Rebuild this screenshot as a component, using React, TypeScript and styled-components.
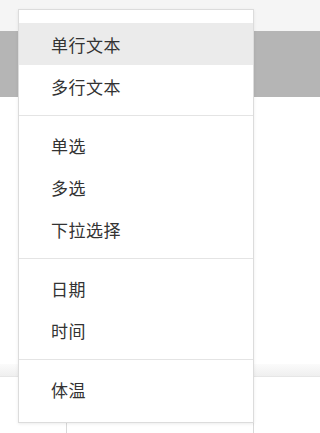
import React from "react";
import styled, { createGlobalStyle } from "styled-components";

const Global = createGlobalStyle`
  html, body { margin: 0; padding: 0; background: #ffffff; }
  body { font-family: "Noto Sans CJK SC", "Noto Sans", sans-serif; }
`;

const Page = styled.div`
  position: relative;
  width: 100%;
  min-width: 277px;
  height: 433px;
  overflow: hidden;
  display: flex;
  flex-direction: column;
  background: #ffffff;
`;

const TopBar = styled.div`
  height: 31px;
  background: #f5f5f5;
  flex-shrink: 0;
`;

const ActiveBand = styled.div`
  height: 66px;
  background: #b5b5b5;
  flex-shrink: 0;
`;

const Body = styled.div`
  height: 267px;
  background: #ffffff;
  flex-shrink: 0;
`;

const FooterShade = styled.div`
  height: 12px;
  background: linear-gradient(#fbfbfb, #efefef);
  border-bottom: 1px solid #e6e6e6;
  flex-shrink: 0;
`;

const TableRow = styled.div`
  flex: 1;
  display: grid;
  grid-template-columns: 67px 187px 1fr;
`;

const Cell = styled.div<{ $line?: boolean }>`
  border-right: ${(p) => (p.$line ? "1px solid #d9d9d9" : "none")};
`;

const Menu = styled.div`
  position: absolute;
  left: 18px;
  top: 9px;
  width: 236px;
  box-sizing: border-box;
  background: #ffffff;
  border: 1px solid #dcdcdc;
  box-shadow: 0 1px 3px rgba(0, 0, 0, 0.08);
  padding: 13px 0 12px;
  display: flex;
  flex-direction: column;
`;

const Item = styled.div<{ $active?: boolean }>`
  height: 42px;
  display: flex;
  align-items: center;
  padding-left: 32px;
  font-size: 17px;
  color: #333333;
  background: ${(p) => (p.$active ? "#ebebeb" : "transparent")};
  letter-spacing: 0.5px;
`;

const Divider = styled.div`
  height: 1px;
  background: #e4e4e4;
  margin: 8px 0;
`;

const groups = [
  ["单行文本", "多行文本"],
  ["单选", "多选", "下拉选择"],
  ["日期", "时间"],
  ["体温"],
];

export default function App() {
  return (
    <>
      <Global />
      <Page>
        <TopBar />
        <ActiveBand />
        <Body />
        <FooterShade />
        <TableRow>
          <Cell $line />
          <Cell $line />
          <Cell />
        </TableRow>
        <Menu>
          {groups.map((g, gi) => (
            <React.Fragment key={gi}>
              {gi > 0 && <Divider />}
              {g.map((t, i) => (
                <Item key={t} $active={gi === 0 && i === 0}>
                  {t}
                </Item>
              ))}
            </React.Fragment>
          ))}
        </Menu>
      </Page>
    </>
  );
}
